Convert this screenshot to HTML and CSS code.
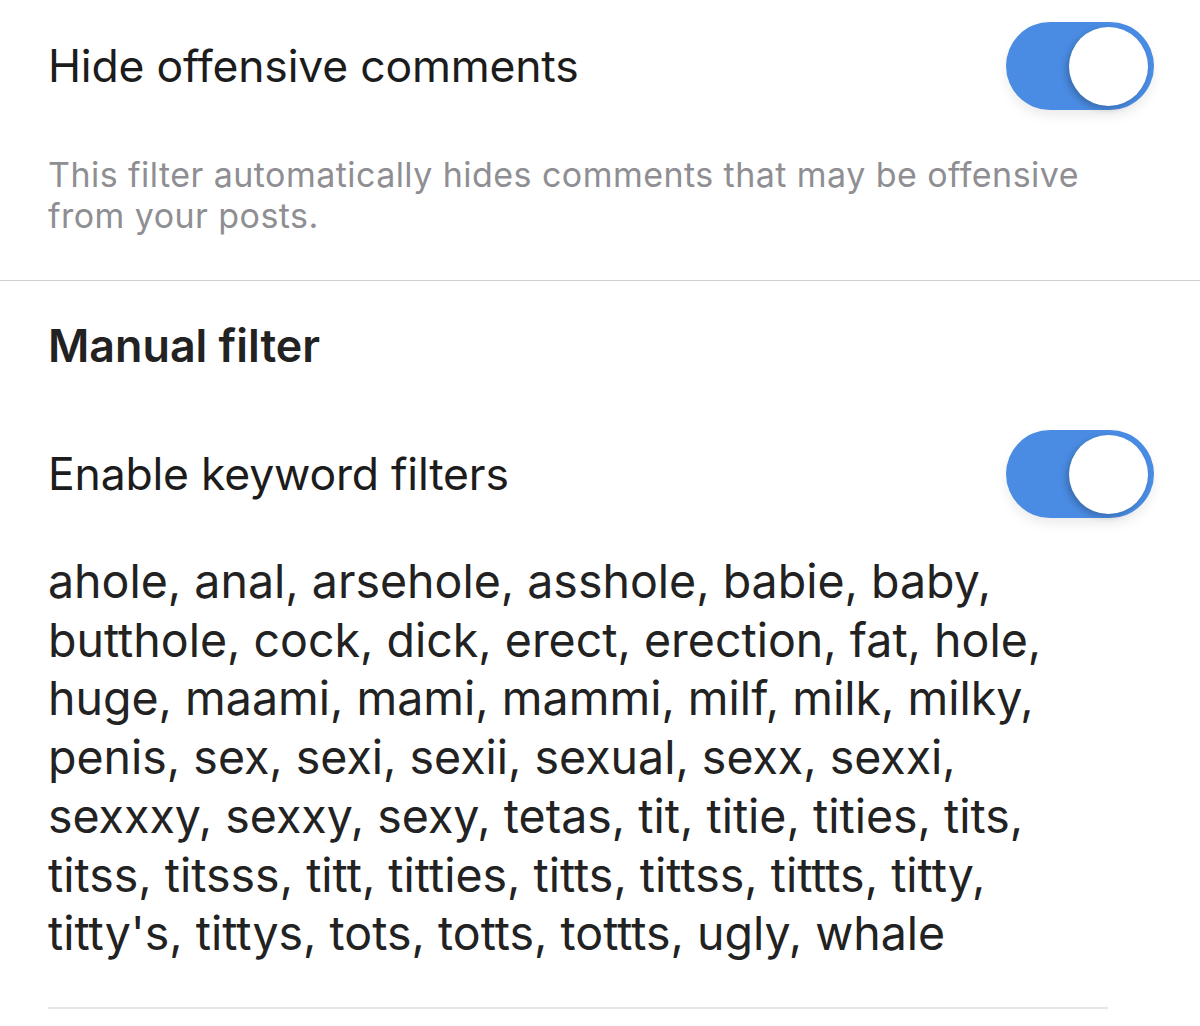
FILE: index.html
```html
<!DOCTYPE html>
<html>
<head>
<meta charset="utf-8">
<link rel="stylesheet" href="styles.css">
</head>
<body>
<section class="block">
  <div class="row">
    <span class="label">Hide offensive comments</span>
    <span class="toggle on"><span class="knob"></span></span>
  </div>
  <p class="desc">This filter automatically hides comments that may be offensive from your posts.</p>
</section>
<section class="block manual">
  <h2 class="heading">Manual filter</h2>
  <div class="row">
    <span class="label">Enable keyword filters</span>
    <span class="toggle on"><span class="knob"></span></span>
  </div>
  <p class="keywords">ahole, anal, arsehole, asshole, babie, baby,<br>butthole, cock, dick, erect, erection, fat, hole,<br>huge, maami, mami, mammi, milf, milk, milky,<br>penis, sex, sexi, sexii, sexual, sexx, sexxi,<br>sexxxy, sexxy, sexy, tetas, tit, titie, tities, tits,<br>titss, titsss, titt, titties, titts, tittss, tittts, titty,<br>titty's, tittys, tots, totts, tottts, ugly, whale</p>
  <div class="rule"></div>
</section>
</body>
</html>
```

FILE: styles.css
```css
html, body {
  margin: 0;
  padding: 0;
  background: #fff;
}
body {
  font-family: Inter, "Open Sans", "Liberation Sans", sans-serif;
  color: #1c1c1c;
  width: 1200px;
  height: 1026px;
  overflow: hidden;
}
.block {
  padding-left: 48px;
  padding-right: 46px;
}
.block:first-child {
  border-bottom: 1px solid #cfcfcf;
  padding-bottom: 44px;
}
.row {
  display: flex;
  align-items: center;
  justify-content: space-between;
  height: 132px;
}
.label {
  font-size: 44.5px;
  letter-spacing: -0.2px;
}
.toggle {
  position: relative;
  width: 148px;
  height: 88px;
  border-radius: 44px;
  background: #4a8ce3;
  box-shadow: 0 6px 12px rgba(0,0,0,0.08);
}
.knob {
  position: absolute;
  top: 5px;
  right: 6px;
  width: 79px;
  height: 79px;
  border-radius: 50%;
  background: #fff;
  box-shadow: -3px 3px 6px rgba(0,0,0,0.22);
}
.desc {
  margin: 22px 0 0;
  font-size: 34px;
  letter-spacing: 0.45px;
  line-height: 41px;
  color: #8e8e93;
  max-width: 1060px;
}
.heading {
  margin: 0 0 36px;
  padding-top: 39px;
  font-size: 44.8px;
  font-weight: 600;
  line-height: 52px;
  color: #222;
}
.keywords {
  margin: 12px 0 0;
  font-size: 46.5px;
  line-height: 58.7px;
  color: #222;
  white-space: nowrap;
}
.rule {
  margin-top: 44px;
  height: 2px;
  background: #e6e6e6;
  width: 1060px;
}
```
